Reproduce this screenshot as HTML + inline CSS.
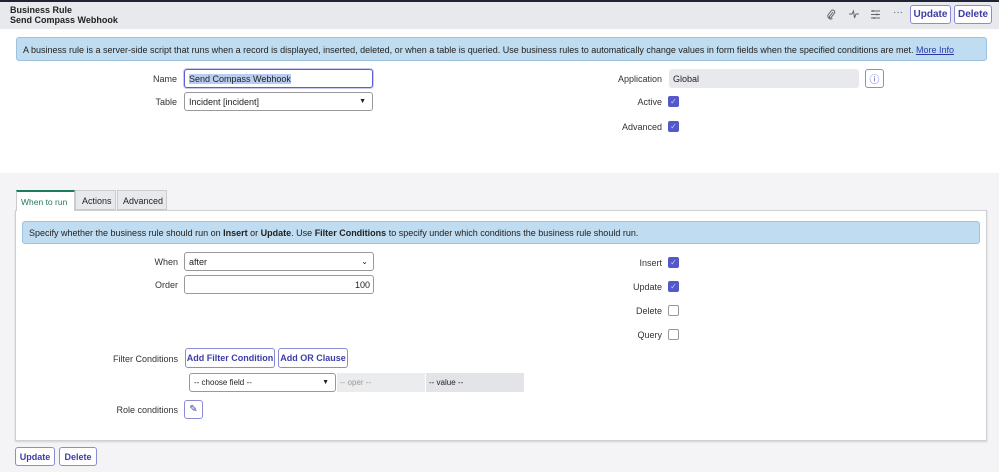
<!DOCTYPE html>
<html><head><style>
*{box-sizing:border-box;margin:0;padding:0}
body{width:999px;height:472px;overflow:hidden;background:#f4f4f6;font-family:"Liberation Sans",sans-serif;font-size:9px;color:#222;position:relative}
.a{position:absolute;white-space:nowrap}
.lbl{position:absolute;text-align:right;font-size:9px;color:#333}
.inp{position:absolute;border:1px solid #999;border-radius:3px;background:#fff;font-size:9px;padding-left:4px;display:flex;align-items:center}
.btn{position:absolute;border:1px solid #8b8bd6;border-radius:3px;background:#fff;color:#3c3ca8;font-weight:bold;font-size:9px;display:flex;align-items:center;justify-content:center;white-space:nowrap}
.cb{position:absolute;width:11px;height:11px;border-radius:2px}
.on{background:#5558c8;color:#cfd0ff;font-size:8px;line-height:11px;text-align:center}
.off{border:1px solid #999;background:#fff}
</style></head><body>
<div class="a" style="left:0;top:0;width:999px;height:2px;background:#1f2333"></div>
<div class="a" style="left:0;top:2px;width:999px;height:27px;background:#e8e9ec"></div>
<div class="a" style="left:10px;top:5px;font-weight:bold;font-size:9px;line-height:10px">Business Rule<br>Send Compass Webhook</div>
<svg class="a" style="left:826px;top:9px" width="10" height="11" viewBox="0 0 10 11"><path d="M7 3L3.5 7.5a1 1 0 0 0 1.5 1.2L8.5 4a2 2 0 0 0-3-2.5L2 6a3 3 0 0 0 4.5 3.5" fill="none" stroke="#666" stroke-width="1"/></svg>
<svg class="a" style="left:848px;top:9px" width="11" height="11" viewBox="0 0 11 11"><path d="M1 5h3l1.5-3 1 7 1.5-4h3" fill="none" stroke="#666" stroke-width="1"/></svg>
<svg class="a" style="left:870px;top:9px" width="11" height="11" viewBox="0 0 11 11"><path d="M1 2h9M1 5.5h9M1 9h9M3 1v2M7 4.5v2M4 8v2" fill="none" stroke="#666" stroke-width="1"/></svg>
<div class="a" style="left:893px;top:7px;color:#555;font-size:10px">···</div>
<div class="btn" style="left:910px;top:5px;width:41px;height:19px;font-size:10px">Update</div>
<div class="btn" style="left:954px;top:5px;width:38px;height:19px;font-size:10px">Delete</div>
<div class="a" style="left:0;top:29px;width:999px;height:144px;background:#fff"></div>
<div class="a" style="left:16px;top:37px;width:971px;height:24px;background:#bfdcf0;border:1px solid #9cc3e0;border-radius:3px;padding:7px 6px;font-size:9px">A business rule is a server-side script that runs when a record is displayed, inserted, deleted, or when a table is queried. Use business rules to automatically change values in form fields when the specified conditions are met. <span style="color:#2b3aa8;text-decoration:underline">More Info</span></div>
<div class="lbl" style="left:100px;top:74px;width:77px">Name</div>
<div class="inp" style="left:184px;top:69px;width:189px;height:19px;border:1px solid #5c5fd0;box-shadow:0 0 0 1px #c9caf0"><span style="background:#b9cdf0">Send Compass Webhook</span></div>
<div class="lbl" style="left:100px;top:97px;width:77px">Table</div>
<div class="inp" style="left:184px;top:92px;width:189px;height:19px">Incident [incident]<span style="position:absolute;right:6px;font-size:7px">▼</span></div>
<div class="lbl" style="left:580px;top:74px;width:82px">Application</div>
<div class="inp" style="left:669px;top:69px;width:190px;height:19px;background:#e8e9ec;border:none">Global</div>
<div class="btn" style="left:865px;top:69px;width:19px;height:19px;color:#5558c8;font-weight:normal;font-size:10px">ⓘ</div>
<div class="lbl" style="left:580px;top:97px;width:82px">Active</div>
<div class="cb on" style="left:668px;top:96px">✓</div>
<div class="lbl" style="left:580px;top:122px;width:82px">Advanced</div>
<div class="cb on" style="left:668px;top:121px">✓</div>
<div class="a" style="left:16px;top:190px;width:59px;height:21px;background:#fff;border:1px solid #ccc;border-top:2px solid #1e7c5a;border-bottom:none;color:#1e7c5a;padding:5px 4px;font-size:8.5px;z-index:2">When to run</div>
<div class="a" style="left:75px;top:190px;width:41px;height:20px;background:#e8e9ec;border:1px solid #ccc;padding:5px 6px">Actions</div>
<div class="a" style="left:117px;top:190px;width:50px;height:20px;background:#e8e9ec;border:1px solid #ccc;padding:5px 5px">Advanced</div>
<div class="a" style="left:15px;top:210px;width:972px;height:231px;background:#fff;border:1px solid #d0d0d4;box-shadow:0 1px 2px rgba(0,0,0,.15)"></div>
<div class="a" style="left:22px;top:221px;width:958px;height:23px;background:#bfdcf0;border:1px solid #9cc3e0;border-radius:3px;padding:6px 6px">Specify whether the business rule should run on <b>Insert</b> or <b>Update</b>. Use <b>Filter Conditions</b> to specify under which conditions the business rule should run.</div>
<div class="lbl" style="left:100px;top:257px;width:78px">When</div>
<div class="inp" style="left:184px;top:252px;width:190px;height:19px">after<span style="position:absolute;right:5px;font-size:8px">⌄</span></div>
<div class="lbl" style="left:100px;top:280px;width:78px">Order</div>
<div class="inp" style="left:184px;top:275px;width:190px;height:19px;justify-content:flex-end;padding-right:3px">100</div>
<div class="lbl" style="left:600px;top:258px;width:62px">Insert</div>
<div class="cb on" style="left:668px;top:257px">✓</div>
<div class="lbl" style="left:600px;top:282px;width:62px">Update</div>
<div class="cb on" style="left:668px;top:281px">✓</div>
<div class="lbl" style="left:600px;top:306px;width:62px">Delete</div>
<div class="cb off" style="left:668px;top:305px"></div>
<div class="lbl" style="left:600px;top:330px;width:62px">Query</div>
<div class="cb off" style="left:668px;top:329px"></div>
<div class="lbl" style="left:90px;top:354px;width:88px">Filter Conditions</div>
<div class="btn" style="left:185px;top:348px;width:90px;height:20px">Add Filter Condition</div>
<div class="btn" style="left:278px;top:348px;width:70px;height:20px">Add OR Clause</div>
<div class="inp" style="left:189px;top:373px;width:147px;height:19px;font-size:8px">-- choose field --<span style="position:absolute;right:6px;font-size:7px">▼</span></div>
<div class="a" style="left:337px;top:373px;width:88px;height:19px;background:#ebecee;color:#999;padding:5px 3px;font-size:8px">-- oper --</div>
<div class="a" style="left:426px;top:373px;width:98px;height:19px;background:#e3e4e7;padding:5px 3px;font-size:8px">-- value --</div>
<div class="lbl" style="left:90px;top:405px;width:88px">Role conditions</div>
<div class="btn" style="left:184px;top:400px;width:19px;height:19px;font-weight:normal;font-size:10px">✎</div>
<div class="btn" style="left:15px;top:447px;width:40px;height:19px">Update</div>
<div class="btn" style="left:59px;top:447px;width:38px;height:19px">Delete</div>
</body></html>
